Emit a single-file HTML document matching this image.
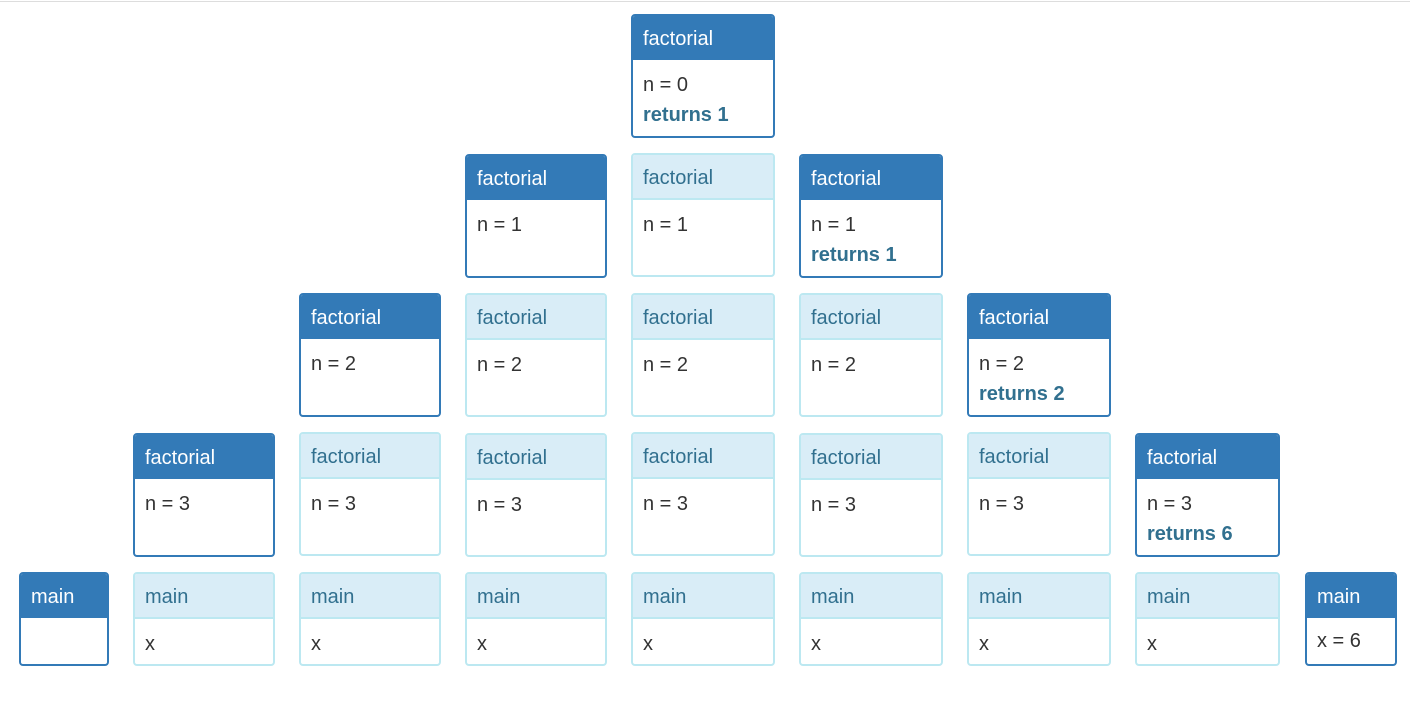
<!DOCTYPE html>
<html><head><meta charset="utf-8"><style>
body{margin:0;width:1422px;height:713px;background:#fff;font-family:"Liberation Sans",Arial,sans-serif;position:relative;overflow:hidden}
.top{position:absolute;left:0;top:1px;width:1410px;height:1px;background:#ddd}
.b{position:absolute;box-sizing:border-box;border:2px solid #337ab7;border-radius:4px;background:#fff;height:124px;overflow:hidden}
.b .h{height:46px;background:#337ab7;color:#fff;font-size:20px;line-height:46px;padding-left:10px;box-sizing:border-box;margin-top:-2px;padding-top:2px}
.b .c{padding:10px 10px 0;font-size:20px;line-height:30px;color:#333}
.b .c b{color:#31708f}
.i{border-color:#bce8f1}
.i .h{background:#d9edf7;color:#31708f;border-bottom:2px solid #bce8f1;height:47px;line-height:46px}
.i .c{padding-top:10px}
.m .c{padding-top:8px}
.m.i .c{padding-top:10px}
.m{height:94px}
</style></head><body>
<div class="top"></div>

<div class="b" style="left:631px;top:14px;width:144px"><div class="h">factorial</div><div class="c">n = 0<br><b>returns 1</b></div></div>

<div class="b" style="left:465px;top:154px;width:142px"><div class="h">factorial</div><div class="c">n = 1</div></div>
<div class="b i" style="left:631px;top:153px;width:144px"><div class="h">factorial</div><div class="c">n = 1</div></div>
<div class="b" style="left:799px;top:154px;width:144px"><div class="h">factorial</div><div class="c">n = 1<br><b>returns 1</b></div></div>

<div class="b" style="left:299px;top:293px;width:142px"><div class="h">factorial</div><div class="c">n = 2</div></div>
<div class="b i" style="left:465px;top:293px;width:142px"><div class="h">factorial</div><div class="c">n = 2</div></div>
<div class="b i" style="left:631px;top:293px;width:144px"><div class="h">factorial</div><div class="c">n = 2</div></div>
<div class="b i" style="left:799px;top:293px;width:144px"><div class="h">factorial</div><div class="c">n = 2</div></div>
<div class="b" style="left:967px;top:293px;width:144px"><div class="h">factorial</div><div class="c">n = 2<br><b>returns 2</b></div></div>

<div class="b" style="left:133px;top:433px;width:142px"><div class="h">factorial</div><div class="c">n = 3</div></div>
<div class="b i" style="left:299px;top:432px;width:142px"><div class="h">factorial</div><div class="c">n = 3</div></div>
<div class="b i" style="left:465px;top:433px;width:142px"><div class="h">factorial</div><div class="c">n = 3</div></div>
<div class="b i" style="left:631px;top:432px;width:144px"><div class="h">factorial</div><div class="c">n = 3</div></div>
<div class="b i" style="left:799px;top:433px;width:144px"><div class="h">factorial</div><div class="c">n = 3</div></div>
<div class="b i" style="left:967px;top:432px;width:144px"><div class="h">factorial</div><div class="c">n = 3</div></div>
<div class="b" style="left:1135px;top:433px;width:145px"><div class="h">factorial</div><div class="c">n = 3<br><b>returns 6</b></div></div>

<div class="b m" style="left:19px;top:572px;width:90px"><div class="h">main</div><div class="c"></div></div>
<div class="b i m" style="left:133px;top:572px;width:142px"><div class="h">main</div><div class="c">x</div></div>
<div class="b i m" style="left:299px;top:572px;width:142px"><div class="h">main</div><div class="c">x</div></div>
<div class="b i m" style="left:465px;top:572px;width:142px"><div class="h">main</div><div class="c">x</div></div>
<div class="b i m" style="left:631px;top:572px;width:144px"><div class="h">main</div><div class="c">x</div></div>
<div class="b i m" style="left:799px;top:572px;width:144px"><div class="h">main</div><div class="c">x</div></div>
<div class="b i m" style="left:967px;top:572px;width:144px"><div class="h">main</div><div class="c">x</div></div>
<div class="b i m" style="left:1135px;top:572px;width:145px"><div class="h">main</div><div class="c">x</div></div>
<div class="b m" style="left:1305px;top:572px;width:92px"><div class="h">main</div><div class="c">x = 6</div></div>
</body></html>
